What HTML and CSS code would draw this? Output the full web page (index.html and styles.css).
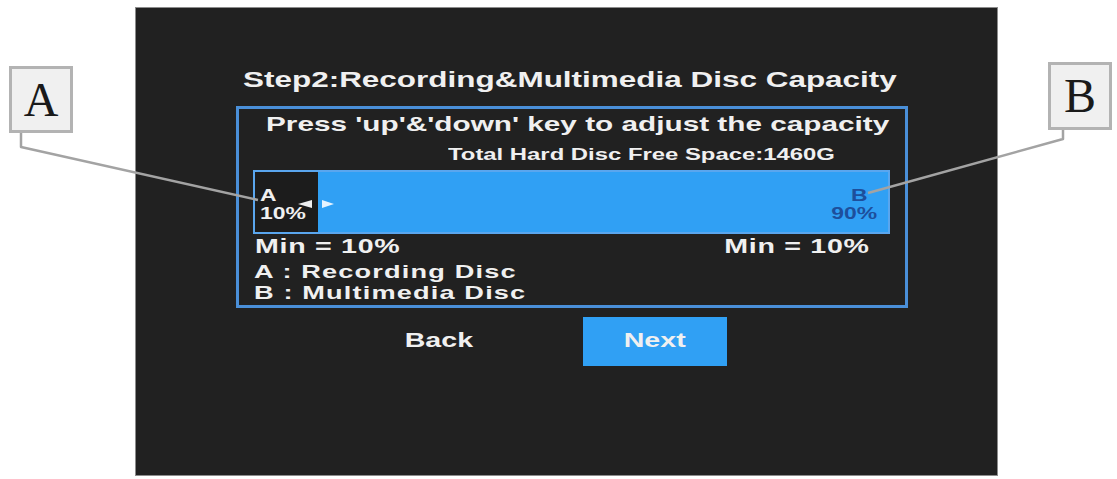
FILE: index.html
```html
<!DOCTYPE html>
<html lang="en">
<head>
<meta charset="utf-8">
<title>Step2: Recording &amp; Multimedia Disc Capacity</title>
<link rel="stylesheet" href="styles.css">
</head>
<body>
<div class="page">
  <div class="panel">
    <h1 class="title"><span class="wide">Step2:Recording&amp;Multimedia Disc Capacity</span></h1>
    <div class="box">
      <p class="hint"><span class="wide">Press 'up'&amp;'down' key to adjust the capacity</span></p>
      <p class="free"><span class="wide">Total Hard Disc Free Space:1460G</span></p>
      <div class="bar">
        <div class="seg seg-a" style="width:10%">
          <span class="wide">A</span>
          <span class="wide">10%</span>
          <svg class="handle" width="36" height="10" viewBox="0 0 36 10" aria-hidden="true">
            <polygon points="0,5 14,1 14,9" fill="#eeeeee"/>
            <polygon points="24,1 24,9 36,5" fill="#e6f3ff"/>
          </svg>
        </div>
        <div class="seg seg-b">
          <span class="wide wide-r lab-b">B</span>
          <span class="wide wide-r">90%</span>
        </div>
      </div>
      <div class="mins">
        <span class="wide">Min = 10%</span>
        <span class="wide wide-r">Min = 10%</span>
      </div>
      <div class="legend">
        <p><span class="wide">A : Recording Disc</span></p>
        <p><span class="wide">B : Multimedia Disc</span></p>
      </div>
    </div>
    <div class="actions">
      <button class="btn btn-back" type="button"><span class="wide wide-c">Back</span></button>
      <button class="btn btn-next" type="button"><span class="wide wide-c">Next</span></button>
    </div>
  </div>
  <svg class="leaders" width="1117" height="479" viewBox="0 0 1117 479" aria-hidden="true">
    <polyline points="21,133 21,147 258,200" fill="none" stroke="#a3a3a3" stroke-width="2.5" stroke-linejoin="round"/>
    <polyline points="1063,129 1063,139 868,193" fill="none" stroke="#a3a3a3" stroke-width="2.5" stroke-linejoin="round"/>
  </svg>
  <div class="callout callout-a">A</div>
  <div class="callout callout-b">B</div>
</div>
</body>
</html>
```

FILE: styles.css
```css
html, body {
  margin: 0;
  background: #ffffff;
}

body {
  font-family: "Liberation Sans", Arial, sans-serif;
}

.page {
  position: relative;
  width: 1117px;
  height: 479px;
  box-sizing: border-box;
  padding: 7px 0 0 135px;
}

/* the on-screen UI is a 4:3 menu shown stretched on a wide screen */
.wide {
  display: inline-block;
  white-space: nowrap;
  transform: scaleX(1.43);
  transform-origin: 0 50%;
}

.wide-r {
  transform-origin: 100% 50%;
}

.wide-c {
  transform-origin: 50% 50%;
}

.panel {
  width: 863px;
  height: 469px;
  box-sizing: border-box;
  background: #212121;
  border: 1px solid #8c8c8c;
  padding: 59px 0 0 100px;
  display: flex;
  flex-direction: column;
  align-items: flex-start;
  color: #f0f0f0;
  font-weight: bold;
}

.title {
  margin: 0 0 0 7px;
  font-size: 22px;
  line-height: 26px;
  font-weight: bold;
}

.box {
  margin-top: 13px;
  width: 672px;
  box-sizing: border-box;
  border: 3px solid #4a8fd8;
  padding: 4px 15px 2px 14px;
}

.hint {
  margin: 0 0 0 13px;
  font-size: 20.8px;
  line-height: 22px;
}

.free {
  margin: 10px 0 0 195px;
  font-size: 16.7px;
  line-height: 20px;
}

.bar {
  margin-top: 5px;
  height: 64px;
  box-sizing: border-box;
  border: 2px solid #5aa6ee;
  background: #30a0f4;
  display: flex;
}

.seg {
  display: flex;
  flex-direction: column;
  justify-content: flex-end;
  box-sizing: border-box;
  padding-bottom: 9px;
  font-size: 16px;
  line-height: 18px;
}

.seg-a {
  position: relative;
  align-items: flex-start;
  background: #1c1c1c;
  padding-left: 5px;
  color: #f0f0f0;
}

.handle {
  position: absolute;
  left: calc(100% - 20px);
  top: 27px;
}

.seg-b {
  flex: 1;
  align-items: flex-end;
  color: #1d4f9c;
  padding-right: 11px;
}

.seg-b .lab-b {
  margin-right: 9px;
}

.mins {
  margin-top: 2px;
  display: flex;
  justify-content: space-between;
  padding: 0 20px 0 2px;
  font-size: 20px;
  line-height: 20px;
  letter-spacing: 0.5px;
}

.legend {
  margin: 5px 0 0 1px;
  font-size: 19px;
  line-height: 21px;
  letter-spacing: 0.8px;
}

.legend p {
  margin: 0;
}

.actions {
  margin: 9px 0 0 131px;
  display: flex;
  gap: 72px;
}

.btn {
  width: 144px;
  height: 49px;
  border: 0;
  padding: 0 0 3px;
  font-family: "Liberation Sans", Arial, sans-serif;
  font-weight: bold;
  font-size: 20px;
  line-height: 46px;
  color: #f0f0f0;
  background: transparent;
}

.btn-next {
  background: #30a0f4;
}

.leaders {
  position: absolute;
  left: 0;
  top: 0;
}

.callout {
  position: absolute;
  box-sizing: border-box;
  background: #f0f0f0;
  border: 3px solid #b3b3b3;
  font-family: "Liberation Serif", serif;
  font-size: 48px;
  line-height: 1;
  color: #1a1a1a;
  display: flex;
  align-items: center;
  justify-content: center;
}

.callout-a {
  left: 9px;
  top: 66px;
  width: 64px;
  height: 67px;
}

.callout-b {
  left: 1048px;
  top: 62px;
  width: 64px;
  height: 68px;
}
```
